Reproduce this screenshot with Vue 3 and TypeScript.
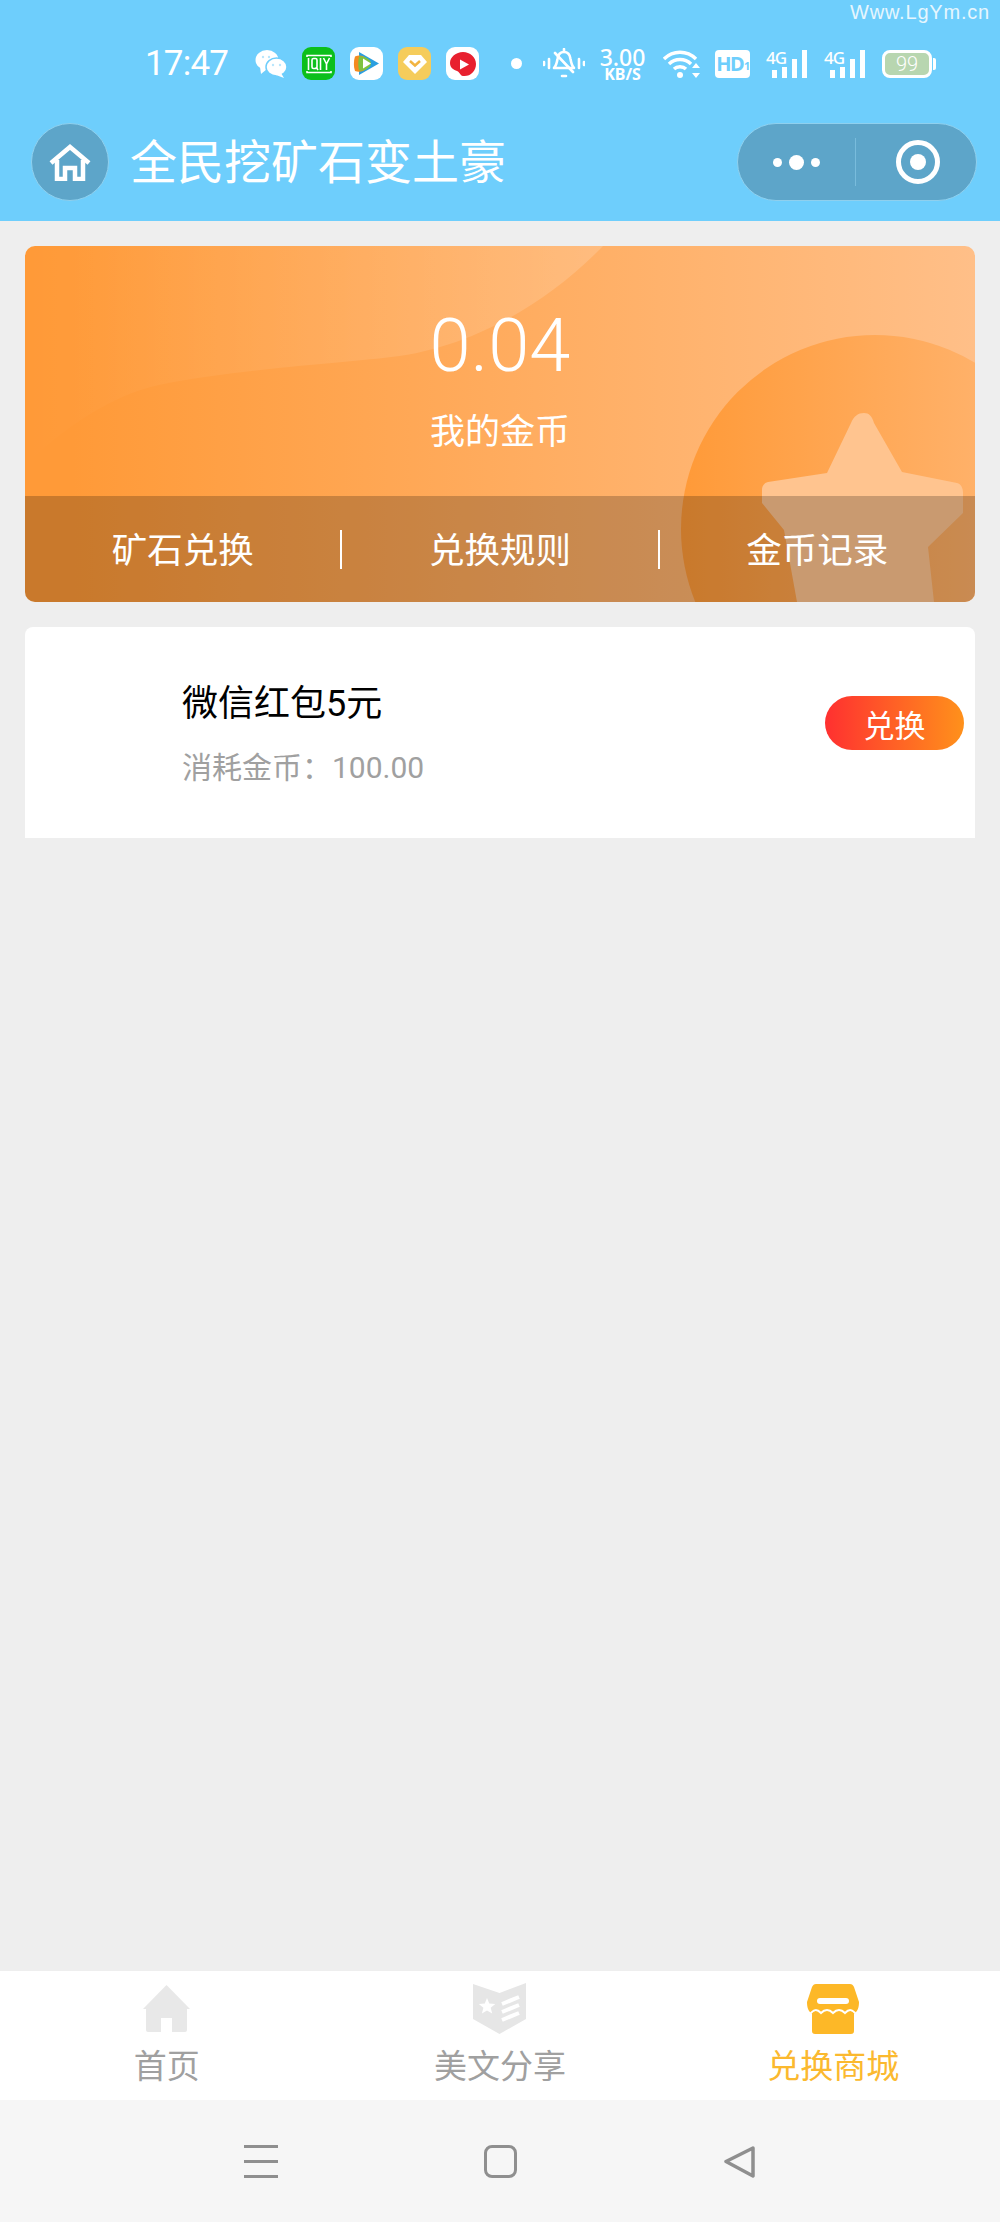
<script setup lang="ts">
const actions = ["矿石兑换", "兑换规则", "金币记录"];
const signals = [1, 2];
</script>

<template>
  <div class="page">
    <header class="header">
      <span class="watermark">Www.LgYm.cn</span>

      <div class="status">
        <span class="time">17:47</span>
        <div class="apps">
          <svg width="32" height="28" viewBox="0 0 32 28">
            <ellipse cx="12" cy="10" rx="11.5" ry="10" fill="#fff" />
            <path d="M5 17l1 7 6-5z" fill="#fff" />
            <ellipse cx="21.5" cy="17" rx="10.5" ry="9" fill="#fff" stroke="#6eceFC" stroke-width="1.5" />
            <path d="M26 23l3 5-8-3z" fill="#fff" />
            <circle cx="8" cy="7" r="1.2" fill="#b9e6fc" />
            <circle cx="14" cy="7" r="1.2" fill="#b9e6fc" />
            <circle cx="18" cy="15" r="1.2" fill="#b9e6fc" />
            <circle cx="25" cy="15" r="1.2" fill="#b9e6fc" />
          </svg>
          <div class="app-icon iqiyi">
            <svg width="26" height="20" viewBox="0 0 26 20" fill="none" stroke="#fff" stroke-width="1.6">
              <path d="M1 3V1.5h24V3M1 17v1.5h24V17" />
              <path d="M2.5 4v12" />
              <rect x="6" y="4.5" width="5" height="10" rx="1.5" />
              <path d="M10 13l2 3M14.5 4v12M17.5 4l3 6 3-6M20.5 10v6" />
            </svg>
          </div>
          <div class="app-icon white">
            <svg width="27" height="27" viewBox="0 0 27 27">
              <path d="M6 2l20 11.500L6 25z" fill="#2a9fe0" />
              <path d="M2 6.500c6-3 13 1 13 7s-7 10-13 7.500c-1.500-4-1.500-10 0-14.500z" fill="#f58a1f" />
              <path d="M6 6.500c6-1 12 3.500 12 7s-6 8-12 7c-1-4-1-10 0-14z" fill="#7fc241" />
              <path d="M10 8.500l8 5-8 5z" fill="#fff" />
            </svg>
          </div>
          <div class="app-icon gold">
            <svg width="24" height="20" viewBox="0 0 24 20">
              <path d="M6 1h12l6 7-12 12L0 8z" fill="#fff" />
              <path d="M7 7l5 4.500L17 7" fill="none" stroke="#f2b441" stroke-width="2.500" />
            </svg>
          </div>
          <div class="app-icon white">
            <svg width="28" height="28" viewBox="0 0 28 28">
              <path d="M14 2c7 0 13 5 13 12s-6 13-13 12c-3-.5-3-4-6-5s-7-3-7-8C1 7 7 2 14 2z" fill="#e8202f" />
              <path d="M11 9.500l9 5-9 5z" fill="#fff" />
            </svg>
          </div>
        </div>

        <div class="system">
          <i class="dot"></i>
          <svg width="42" height="32" viewBox="0 0 42 32" fill="none" stroke="#fff" stroke-width="2.600" stroke-linecap="round" stroke-linejoin="round">
            <path d="M1 14v3M6 11v9M36 11v9M41 14v3" />
            <path d="M21 4c-4 0-6 3-6.500 7-.5 3-1.500 7-3.500 9h20c-2-2-3-6-3.500-9C27 7 25 4 21 4z" />
            <path d="M12 5l18 19M21 1v2M19 28h4" />
          </svg>
          <div class="speed">
            <span class="speed-num">3.00</span>
            <span class="speed-unit">KB/S</span>
          </div>
          <svg class="wifi" width="37" height="28" viewBox="0 0 37 28" fill="none" stroke="#fff" stroke-width="3.400">
            <path d="M1 9c9-9 23-9 32 0M6 14c6-6 16-6 22 0M11 19c3-3 9-3 12 0" />
            <circle cx="17" cy="25" r="3" fill="#fff" stroke="none" />
            <path d="M33 13l4 5h-8zM33 28l4-5h-8z" fill="#fff" stroke="none" />
          </svg>
          <div class="hd">HD<small>1</small></div>
          <div v-for="s in signals" :key="s" class="signal">
            <span class="four-g">4G</span>
            <svg width="42" height="28" viewBox="0 0 42 28" fill="#fff">
              <rect x="6" y="20" width="5" height="8" />
              <rect x="16" y="17" width="5" height="11" />
              <rect x="26" y="9" width="5" height="19" />
              <rect x="36" y="0" width="5" height="28" />
            </svg>
          </div>
          <div class="battery">
            <div class="battery-body">99</div>
            <i class="battery-cap"></i>
          </div>
        </div>
      </div>

      <div class="nav">
        <div class="home-btn">
          <svg width="42" height="38" viewBox="0 0 42 38" fill="none" stroke="#fff" stroke-width="4.500">
            <path d="M2 20L21 4l19 16" />
            <path d="M8 17v19h8V25h10v11h8V17" />
          </svg>
        </div>
        <h1 class="title">全民挖矿石变土豪</h1>
        <div class="capsule">
          <div class="capsule-part">
            <i class="cap-dot"></i><i class="cap-dot big"></i><i class="cap-dot"></i>
          </div>
          <i class="capsule-line"></i>
          <div class="capsule-part target">
            <svg width="46" height="46" viewBox="0 0 46 46">
              <circle cx="23" cy="23" r="19.500" fill="none" stroke="#fff" stroke-width="5" />
              <circle cx="23" cy="23" r="8" fill="#fff" />
            </svg>
          </div>
        </div>
      </div>
    </header>

    <main class="main">
      <section class="coin-card">
        <svg class="coin-bg" width="950" height="356" viewBox="0 0 950 356">
          <defs>
            <linearGradient id="waveFill" x1="0" x2="1" y1="0" y2="0">
              <stop offset="0" stop-color="#fff" stop-opacity="0" />
              <stop offset="1" stop-color="#fff" stop-opacity="0.16" />
            </linearGradient>
            <linearGradient id="archFill" x1="0" x2="1" y1="0" y2="0">
              <stop offset="0" stop-color="#ff9a38" />
              <stop offset="1" stop-color="#ffb878" />
            </linearGradient>
          </defs>
          <path d="M0 0H578C520 60 440 105 358 112C300 118 200 125 134 139C100 146 50 170 0 220z" fill="url(#waveFill)" />
          <circle cx="850" cy="283" r="194" fill="url(#archFill)" />
          <path d="M839 167C833 167 829 170 826 177L802 227 743 236C739 237 737 240 737 244V257L759 284 772 356H909L903 301 938 267V247C938 242 936 238 932 237L877 226 849 177C847 170 844 167 839 167z" fill="#ffc48f" />
        </svg>
        <div class="coin-top">
          <div class="coin-num">0.04</div>
          <div class="coin-label">我的金币</div>
        </div>
        <div class="coin-actions">
          <div v-for="a in actions" :key="a" class="coin-action">{{ a }}</div>
        </div>
      </section>

      <section class="goods">
        <div class="goods-thumb"></div>
        <div class="goods-info">
          <div class="goods-name">微信红包5元</div>
          <div class="goods-cost">消耗金币：100.00</div>
        </div>
        <button class="goods-btn">兑换</button>
      </section>
    </main>

    <nav class="tabbar">
      <div class="tab">
        <div class="tab-icon">
          <svg width="47" height="47" viewBox="0 0 47 47" fill="#e8e8e8">
            <path d="M23.500 0L47 24h-3v21a2 2 0 0 1-2 2H29V33H18v14H5a2 2 0 0 1-2-2V24H0z" />
          </svg>
        </div>
        <span>首页</span>
      </div>
      <div class="tab">
        <div class="tab-icon">
          <svg width="53" height="51" viewBox="0 0 53 51">
            <path d="M0 1l26.500 9L53 0v36L26.500 51 0 36z" fill="#e6e6e6" />
            <path d="M14 15l2.300 5.500 6 .4-4.600 3.900 1.500 5.800-5.200-3.200-5.100 3.200 1.500-5.800L5.800 20.900l6-.4z" fill="#fff" />
            <path d="M29 21l17-7M29 29l17-7M29 37l17-7" stroke="#fff" stroke-width="4" />
          </svg>
        </div>
        <span>美文分享</span>
      </div>
      <div class="tab active">
        <div class="tab-icon">
          <svg width="52" height="50" viewBox="0 0 52 50">
            <path d="M9 0h34c2 0 3 1 4 3l5 15c0 5-1 9-5 12v17c0 2-1 3-3 3H8c-2 0-3-1-3-3V30c-4-3-5-7-5-12L5 3c1-2 2-3 4-3z" fill="#fdb827" />
            <rect x="10" y="14" width="32" height="6" rx="3" fill="#fff" />
            <path d="M3 30c4-5 7-5 11-1 4-4 8-4 12 0 4-4 8-4 12 0 4-4 7-4 11 1" fill="none" stroke="#fff" stroke-width="2" />
          </svg>
        </div>
        <span>兑换商城</span>
      </div>
    </nav>

    <footer class="sysnav">
      <div class="menu-icon"><i></i><i></i><i></i></div>
      <div class="square-icon"></div>
      <svg width="33" height="33" viewBox="0 0 33 33" fill="none" stroke="#8f8f8f" stroke-width="3.500" stroke-linejoin="round">
        <path d="M30 3L3 16.500 30 31z" />
      </svg>
    </footer>
  </div>
</template>

<style scoped>
.page {
  position: relative;
  display: flex;
  flex-direction: column;
  height: 2222px;
  overflow: hidden;
  background: #eeeeee;
  font-family: Roboto, "Noto Sans CJK SC", sans-serif;
}

.header {
  height: 221px;
  padding-top: 47px;
  box-sizing: border-box;
  background: #6ecefc;
  color: #fff;
}

.watermark {
  position: absolute;
  top: 0;
  right: 10px;
  font-family: "Liberation Sans", sans-serif;
  font-size: 20px;
  line-height: 24px;
  letter-spacing: 0.8px;
  color: #e6f6fe;
}

.status {
  display: flex;
  align-items: center;
  height: 33px;
  padding-left: 145px;
}

.time {
  width: 83px;
  font-size: 35px;
  font-weight: 400;
  line-height: 33px;
  letter-spacing: -0.8px;
  white-space: nowrap;
}

.apps {
  display: flex;
  align-items: center;
  gap: 15px;
  margin-left: 27px;
}

.app-icon {
  display: flex;
  align-items: center;
  justify-content: center;
  width: 33px;
  height: 33px;
  border-radius: 9px;
}

.iqiyi {
  background: #0cbf1b;
}

.white {
  background: #fff;
}

.gold {
  background: #f5cc5b;
}

.system {
  display: flex;
  align-items: center;
  gap: 15px;
  margin-left: 32px;
}

.dot {
  width: 11px;
  height: 11px;
  margin-right: 6px;
  border-radius: 50%;
  background: #fff;
}

.speed {
  display: flex;
  flex-direction: column;
  align-items: center;
  width: 47px;
  margin-left: -1px;
  font-family: "Noto Sans", sans-serif;
}

.speed-num {
  font-size: 23px;
  font-weight: 500;
  line-height: 20px;
}

.speed-unit {
  font-size: 16px;
  font-weight: 700;
  line-height: 14px;
}

.wifi {
  margin-left: 2px;
}

.hd {
  display: flex;
  align-items: center;
  justify-content: center;
  width: 35px;
  height: 28px;
  border-radius: 4px;
  background: #fff;
  color: #6ecefc;
  font-family: "Noto Sans", sans-serif;
  font-size: 20px;
  font-weight: 700;
  letter-spacing: -1.5px;
}

.hd small {
  margin: 3px 0 0 1px;
  font-size: 11px;
}

.signal {
  position: relative;
  width: 42px;
  height: 28px;
  margin-left: 1px;
}

.signal svg {
  display: block;
}

.four-g {
  position: absolute;
  top: 0;
  left: 0;
  font-family: "Noto Sans", sans-serif;
  font-size: 17px;
  font-weight: 500;
  line-height: 16px;
  letter-spacing: -1px;
}

.battery {
  display: flex;
  align-items: center;
  margin-left: 1px;
}

.battery-body {
  box-sizing: border-box;
  width: 50px;
  height: 28px;
  border: 3px solid #fff;
  border-radius: 8px;
  background: #b8d6b0;
  text-align: center;
  font-size: 20px;
  font-weight: 300;
  line-height: 22px;
}

.battery-cap {
  width: 3px;
  height: 12px;
  margin-left: 1px;
  border-radius: 0 2px 2px 0;
  background: #fff;
}

.nav {
  display: flex;
  align-items: center;
  height: 78px;
  margin-top: 43px;
  padding: 0 23px 0 31px;
}

.home-btn {
  display: flex;
  align-items: center;
  justify-content: center;
  box-sizing: border-box;
  width: 78px;
  height: 78px;
  border: 1px solid #8fd0ee;
  border-radius: 50%;
  background: #5da5c9;
}

.title {
  margin: 2px 0 0 21px;
  font-size: 47px;
  font-weight: 400;
  line-height: 78px;
  white-space: nowrap;
}

.capsule {
  display: flex;
  align-items: center;
  box-sizing: border-box;
  width: 240px;
  height: 78px;
  margin-left: auto;
  border: 1px solid #8fd0ee;
  border-radius: 39px;
  background: #5da5c9;
}

.capsule-part {
  display: flex;
  flex: 1;
  align-items: center;
  justify-content: center;
  gap: 7px;
}

.capsule-part.target {
  padding-left: 4px;
}

.capsule-line {
  width: 1px;
  height: 48px;
  background: #79bcdc;
}

.cap-dot {
  width: 9px;
  height: 9px;
  border-radius: 50%;
  background: #fff;
}

.cap-dot.big {
  width: 15px;
  height: 15px;
}

.main {
  flex: 1;
  padding: 25px 25px 0;
}

.coin-card {
  position: relative;
  height: 356px;
  overflow: hidden;
  border-radius: 10px;
  background: linear-gradient(90deg, #ff9a38 5%, #ffbf88 100%);
  color: #fff;
}

.coin-bg {
  position: absolute;
  top: 0;
  left: 0;
}

.coin-top {
  position: relative;
  height: 250px;
  padding-top: 55px;
  box-sizing: border-box;
  text-align: center;
}

.coin-num {
  font-size: 74px;
  font-weight: 300;
  line-height: 90px;
}

.coin-label {
  margin-top: 17px;
  font-size: 35px;
  line-height: 50px;
}

.coin-actions {
  position: relative;
  display: flex;
  align-items: center;
  height: 106px;
  background: rgba(0, 0, 0, 0.21);
}

.coin-action {
  flex: 1;
  height: 39px;
  border-left: 2px solid #fff;
  font-size: 35.500px;
  line-height: 42px;
  text-align: center;
}

.coin-action:first-child {
  border-left: none;
}

.goods {
  display: flex;
  align-items: center;
  height: 211px;
  margin-top: 25px;
  padding-right: 11px;
  border-radius: 8px 8px 0 0;
  background: #fff;
}

.goods-thumb {
  width: 157px;
}

.goods-info {
  flex: 1;
  margin-top: 6px;
}

.goods-name {
  font-size: 36px;
  line-height: 50px;
  color: #000;
}

.goods-cost {
  margin-top: 14px;
  font-size: 30px;
  line-height: 50px;
  color: #a0a0a0;
}

.goods-btn {
  width: 139px;
  height: 54px;
  margin-top: -19px;
  padding: 0;
  border: none;
  border-radius: 27px;
  background: linear-gradient(90deg, #ff3030, #ff911b);
  color: #fff;
  font-family: inherit;
  font-size: 31px;
}

.tabbar {
  display: flex;
  height: 129px;
  background: #fff;
}

.tab {
  display: flex;
  flex: 1;
  flex-direction: column;
  align-items: center;
  padding-top: 12px;
  color: #a0a0a0;
  font-size: 33px;
  line-height: 46px;
}

.tab-icon {
  display: flex;
  align-items: center;
  height: 51px;
  margin-bottom: 10px;
}

.tab.active {
  color: #fbb92f;
}

.sysnav {
  display: flex;
  align-items: center;
  justify-content: center;
  gap: 206px;
  height: 122px;
  background: #f6f6f6;
}

.menu-icon {
  display: flex;
  flex-direction: column;
  justify-content: space-between;
  width: 34px;
  height: 33px;
}

.menu-icon i {
  height: 3px;
  background: #8f8f8f;
}

.square-icon {
  box-sizing: border-box;
  width: 33px;
  height: 33px;
  border: 3px solid #8f8f8f;
  border-radius: 8px;
}
</style>

<style>
body {
  background: #eeeeee;
}
</style>
